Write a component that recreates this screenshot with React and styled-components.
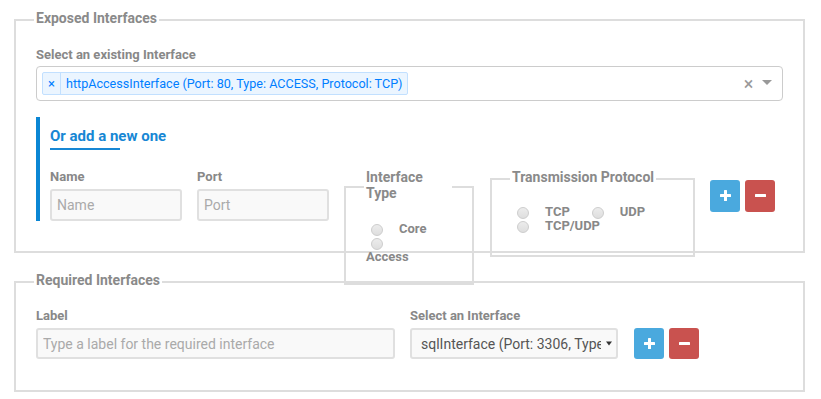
import React from 'react';
import styled, { createGlobalStyle } from 'styled-components';

const GlobalStyle = createGlobalStyle`
  *, *::before, *::after { box-sizing: border-box; }
  html, body { margin: 0; padding: 0; background: #fff; }
  body { font-family: Roboto, "Noto Sans", "Liberation Sans", Arial, sans-serif; color: #555; }
`;

const Page = styled.div`
  width: 821px;
  padding: 10px 16px 0 14px;
  display: flex;
  flex-direction: column;
  gap: 19px;
`;

const Fieldset = styled.fieldset`
  margin: 0;
  min-width: 0;
  border: 2px solid #ddd;
  padding: ${p => p.$pad || '17px 20px 30px'};
`;

const GroupFieldset = styled(Fieldset)`
  flex: none;
  width: ${p => p.$w}px;
  margin: 1px 0 0 ${p => p.$ml || 0}px;
`;

const Legend = styled.legend`
  width: ${p => (p.$w ? `${p.$w}px` : 'auto')};
  margin-left: -2px;
  padding: 0 2px 3px;
  font-size: 14px;
  font-weight: 700;
  line-height: 16px;
  color: #8a8a8a;
`;

const Label = styled.label`
  display: block;
  font-size: 13px;
  font-weight: 700;
  line-height: 17px;
  color: #888;
  margin-bottom: ${p => (p.$mb ?? 4)}px;
`;

const MultiSelect = styled.div`
  height: 35px;
  border: 1px solid #ccc;
  border-radius: 4px;
  display: flex;
  align-items: center;
  padding-left: 5px;
  background: #fff;
`;

const Tag = styled.div`
  display: flex;
  height: 23px;
  border: 1px solid #c2e0ff;
  border-radius: 2px;
  background: #ebf5ff;
  color: #007eff;
  font-size: 12.6px;
  line-height: 21px;
`;

const TagRemove = styled.span`
  padding: 0 5px;
  border-right: 1px solid #c2e0ff;
  font-size: 13px;
`;

const TagLabel = styled.span`
  padding: 0 5px;
`;

const Spacer = styled.div`
  flex: 1;
`;

const ClearZone = styled.span`
  width: 17px;
  text-align: center;
  color: #999;
  font-size: 18px;
  line-height: 1;
`;

const ArrowZone = styled.span`
  width: 25px;
  padding-right: 5px;
  display: flex;
  justify-content: center;
  align-items: center;
`;

const Caret = styled.span`
  width: 0;
  height: 0;
  border-style: solid;
  border-width: 5px 5px 2.5px;
  border-color: #999 transparent transparent;
`;

const AddNew = styled.div`
  margin-top: 16px;
  border-left: 4px solid #0a86d4;
  padding: 9px 0 0 10px;
`;

const AddTitle = styled.div`
  font-size: 15px;
  font-weight: 700;
  line-height: 21px;
  color: #1787d4;
  &::after {
    content: '';
    display: block;
    width: 70px;
    height: 2px;
    margin-top: 1px;
    background: #1787d4;
  }
`;

const FormRow = styled.div`
  display: flex;
  align-items: flex-start;
  gap: 15px;
  height: ${p => (p.$h ? `${p.$h}px` : 'auto')};
  margin-top: ${p => p.$mt || 0}px;
`;

const Field = styled.div`
  flex: none;
  width: ${p => p.$w}px;
  display: flex;
  flex-direction: column;
`;

const TextInput = styled.input`
  width: 100%;
  height: ${p => p.$h}px;
  border: 2px solid #e0e0e0;
  border-radius: 3px;
  background: #f9f9f9;
  padding: 0 5px;
  font-family: inherit;
  font-size: 14px;
  color: #555;
  outline: none;
  &::placeholder { color: #aaa; }
`;

const RadioFlow = styled.div`
  width: ${p => (p.$w ? `${p.$w}px` : 'auto')};
  font-size: 13px;
  font-weight: 700;
  line-height: 14px;
  color: #888;
`;

const Radio = styled.input.attrs({ type: 'radio' })`
  appearance: none;
  -webkit-appearance: none;
  display: inline-block;
  width: 12px;
  height: 12px;
  margin: 0 16px 0 5px;
  border: 1px solid #cdcdcd;
  border-radius: 50%;
  background: linear-gradient(#ececec, #dedede);
  vertical-align: middle;
`;

const RadioText = styled.span`
  display: inline-block;
  margin-right: 17px;
`;

const ButtonGroup = styled.div`
  flex: none;
  display: flex;
  gap: 5px;
  margin-top: ${p => p.$mt}px;
  margin-left: ${p => p.$ml || 0}px;
`;

const IconButton = styled.button`
  width: 30px;
  height: ${p => p.$h}px;
  border: none;
  border-radius: 3px;
  padding: 0 0 1px;
  background: ${p => (p.$variant === 'danger' ? '#c9524f' : '#4aa9de')};
  display: flex;
  align-items: center;
  justify-content: center;
  cursor: pointer;
`;

const DropSelect = styled.div`
  display: flex;
  align-items: center;
  height: 31px;
  border: 2px solid #e0e0e0;
  border-radius: 3px;
  background: #f9f9f9;
  padding-left: 9px;
  font-size: 14px;
  color: #555;
`;

const DropText = styled.span`
  flex: 1;
  min-width: 0;
  overflow: hidden;
  white-space: nowrap;
`;

const DropArrow = styled.span`
  width: 15px;
  display: flex;
  justify-content: center;
  align-items: center;
`;

const PlusIcon = () => (
  <svg width="11" height="11" viewBox="0 0 11 11" fill="#fff">
    <rect x="4" y="0" width="3" height="11" rx="0.5" />
    <rect x="0" y="4" width="11" height="3" rx="0.5" />
  </svg>
);

const MinusIcon = () => (
  <svg width="11" height="11" viewBox="0 0 11 11" fill="#fff">
    <rect x="0" y="4" width="11" height="3" rx="0.5" />
  </svg>
);

const Buttons = ({ h, mt, ml }) => (
  <ButtonGroup $mt={mt} $ml={ml}>
    <IconButton $h={h} aria-label="add"><PlusIcon /></IconButton>
    <IconButton $h={h} $variant="danger" aria-label="remove"><MinusIcon /></IconButton>
  </ButtonGroup>
);

export default function App() {
  return (
    <>
      <GlobalStyle />
      <Page>
        <Fieldset $pad="17px 20px 30px">
          <Legend>Exposed Interfaces</Legend>
          <Label $mb={3}>Select an existing Interface</Label>
          <MultiSelect>
            <Tag>
              <TagRemove>×</TagRemove>
              <TagLabel>httpAccessInterface (Port: 80, Type: ACCESS, Protocol: TCP)</TagLabel>
            </Tag>
            <Spacer />
            <ClearZone>×</ClearZone>
            <ArrowZone><Caret /></ArrowZone>
          </MultiSelect>

          <AddNew>
            <AddTitle>Or add a new one</AddTitle>
            <FormRow $h={53} $mt={18}>
              <Field $w={132}>
                <Label>Name</Label>
                <TextInput $h={32} placeholder="Name" />
              </Field>
              <Field $w={132}>
                <Label>Port</Label>
                <TextInput $h={32} placeholder="Port" />
              </Field>
              <GroupFieldset $w={130} $pad="18px 20px 19px">
                <Legend $w={88}>Interface Type</Legend>
                <RadioFlow $w={80}>
                  <Radio name="itype" /><RadioText>Core</RadioText><Radio name="itype" /><RadioText>Access</RadioText>
                </RadioFlow>
              </GroupFieldset>
              <GroupFieldset $w={205} $ml={1} $pad="17px 20px 22px">
                <Legend>Transmission Protocol</Legend>
                <RadioFlow>
                  <Radio name="proto" /><RadioText>TCP</RadioText><Radio name="proto" /><RadioText>UDP</RadioText><Radio name="proto" /><RadioText>TCP/UDP</RadioText>
                </RadioFlow>
              </GroupFieldset>
              <Buttons h={32} mt={12} />
            </FormRow>
          </AddNew>
        </Fieldset>

        <Fieldset $pad="16px 20px 31px">
          <Legend>Required Interfaces</Legend>
          <FormRow>
            <Field $w={359}>
              <Label>Label</Label>
              <TextInput $h={31} placeholder="Type a label for the required interface" />
            </Field>
            <Field $w={208}>
              <Label>Select an Interface</Label>
              <DropSelect>
                <DropText>sqlInterface (Port: 3306, Type: CORE, Protocol: TCP)</DropText>
                <DropArrow>
                  <svg width="6" height="5" viewBox="0 0 6 5"><path d="M0 0.5h6L3 4.5z" fill="#333" /></svg>
                </DropArrow>
              </DropSelect>
            </Field>
            <Buttons h={31} mt={21} ml={1} />
          </FormRow>
        </Fieldset>
      </Page>
    </>
  );
}
